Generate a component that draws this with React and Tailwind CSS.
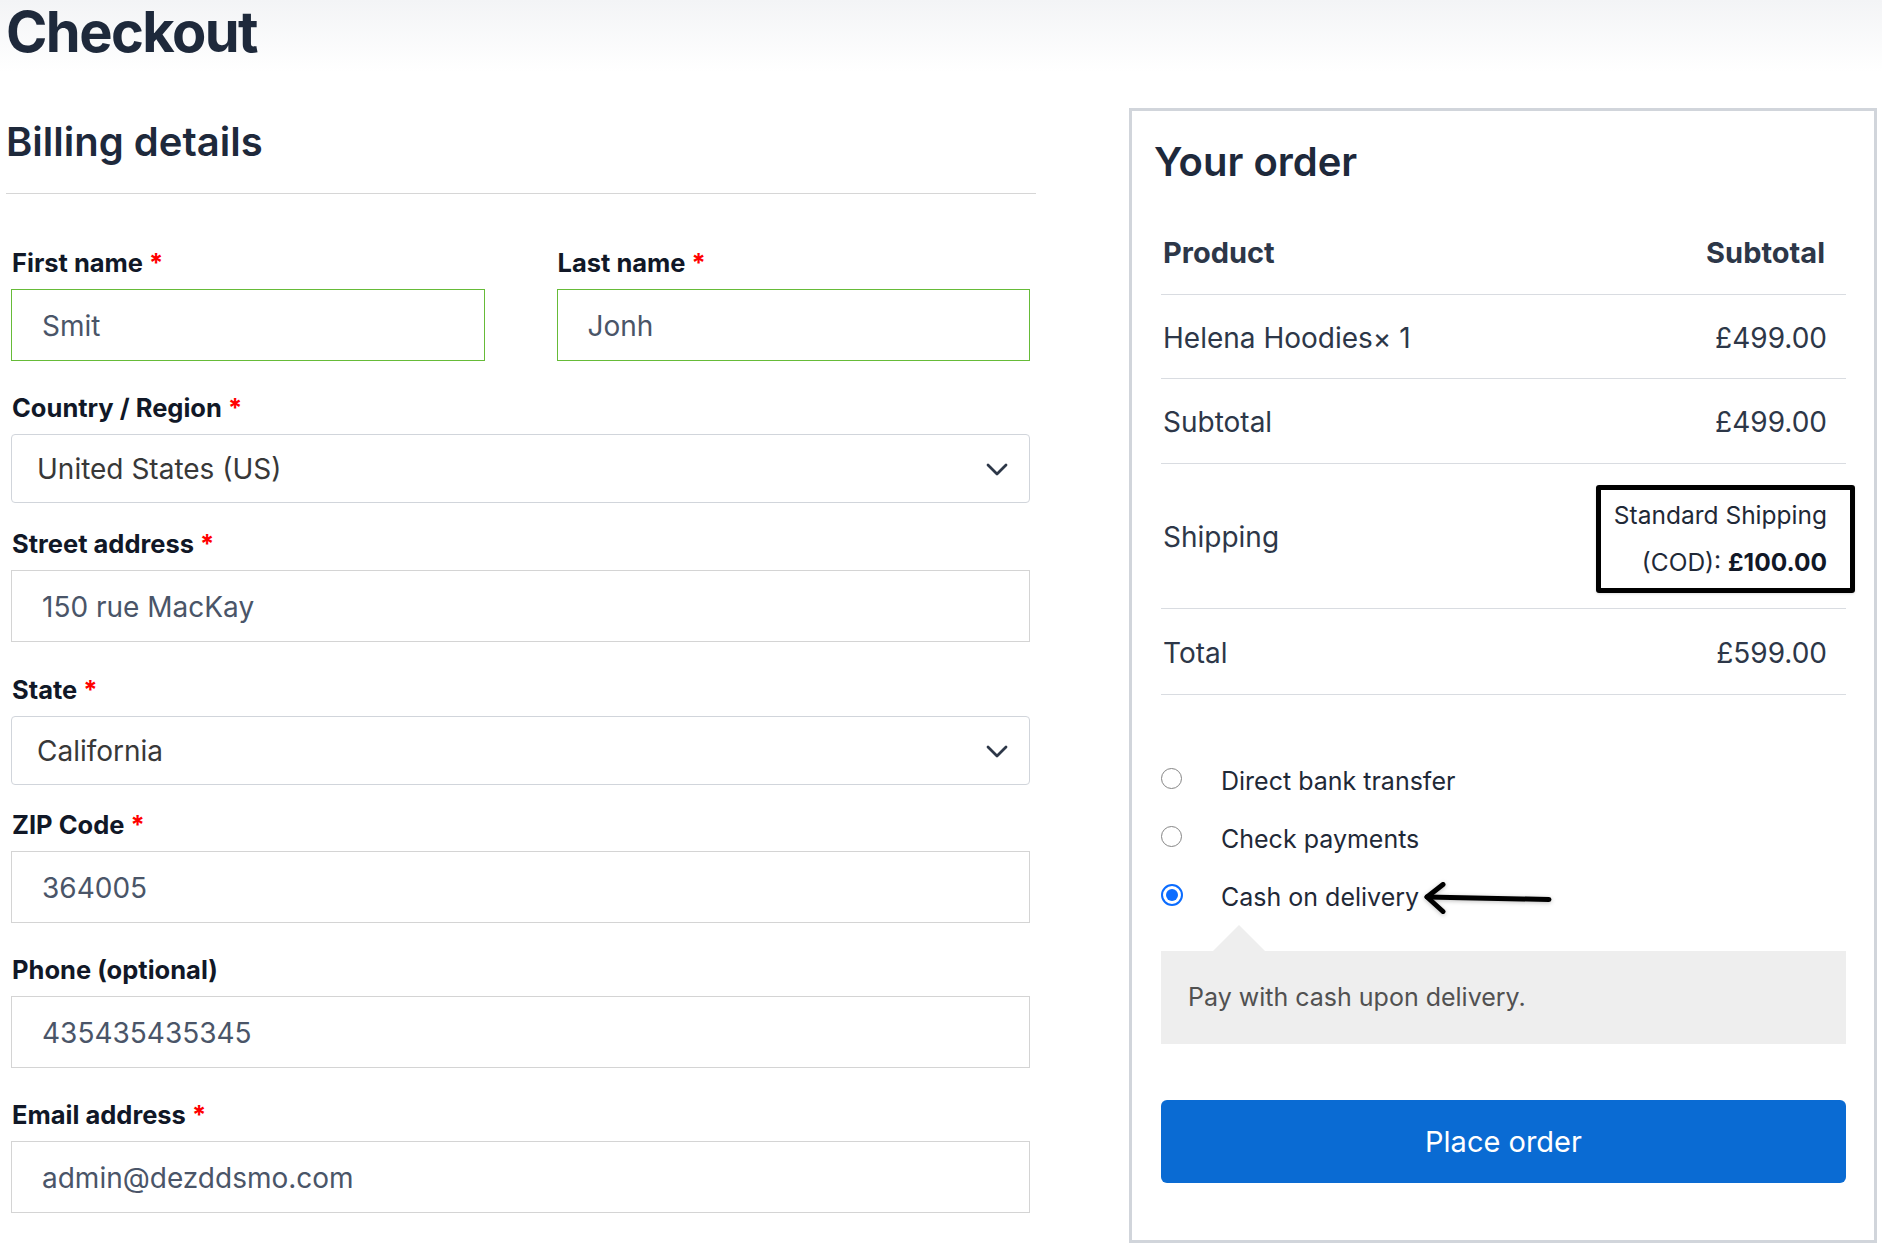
import React from "react";

function Label({ children, required = true }) {
  return (
    <div className="h-[36px] leading-[38px] text-[25.5px] font-bold text-[#111827] pl-[1px] mb-[9px]">
      {children}
      {required && <span className="text-[#ff0000] font-bold"> *</span>}
    </div>
  );
}

function TextInput({ value, green = false }) {
  return (
    <div
      className={
        green
          ? "h-[72px] border border-[#66bb38] flex items-center pl-[30px] pt-[2px] text-[28px] text-[#4a5568]"
          : "h-[72px] border border-[#d4d4d4] flex items-center pl-[30px] pt-[2px] text-[28px] text-[#4a5568]"
      }
    >
      {value}
    </div>
  );
}

function Select({ value }) {
  return (
    <div className="h-[69px] border border-[#d1d5db] rounded-[4px] flex items-center justify-between pl-[25px] pr-[21px] pt-[1px] text-[28px] text-[#383838]">
      <span>{value}</span>
      <svg width="22" height="13" viewBox="0 0 22 13" fill="none">
        <path d="M2 2 L11 11 L20 2" stroke="#2d3748" strokeWidth="2.8" strokeLinecap="round" strokeLinejoin="round" />
      </svg>
    </div>
  );
}

function Radio({ checked }) {
  if (checked) {
    return (
      <div className="w-[22px] h-[22px] rounded-full border-2 border-[#0b6cff] flex items-center justify-center mb-[7px] shrink-0">
        <div className="w-[12px] h-[12px] rounded-full bg-[#0b6cff]" />
      </div>
    );
  }
  return <div className="w-[21px] h-[21px] rounded-full border-[1.5px] border-[#858585] mb-[7px] shrink-0" />;
}

export default function App() {
  return (
    <div className="w-[1882px] h-[1246px] bg-white overflow-hidden font-['Inter','Noto_Sans',sans-serif]">
      <div className="h-[72px] bg-linear-to-b from-[#f3f4f6] to-white pl-[6px]">
        <h1 className="text-[56px] leading-[64px] font-bold text-[#1e293b] tracking-[-0.028em]">Checkout</h1>
      </div>

      <div className="flex pl-[6px]">
        {/* Left column */}
        <div className="w-[1030px] shrink-0">
          <div className="mt-[50px] pb-[31px] border-b border-[#d6d6d6]">
            <h2 className="text-[40px] leading-none font-semibold text-[#1e293b]">Billing details</h2>
          </div>

          <div className="pl-[5px] pr-[6px] mt-[50px]">
            <div className="grid grid-cols-2 gap-x-[72px] mb-[28px]">
              <div>
                <Label>First name</Label>
                <TextInput value="Smit" green />
              </div>
              <div>
                <Label>Last name</Label>
                <TextInput value="Jonh" green />
              </div>
            </div>

            <div className="mb-[22px]">
              <Label>Country / Region</Label>
              <Select value="United States (US)" />
            </div>

            <div className="mb-[29px]">
              <Label>Street address</Label>
              <TextInput value="150 rue MacKay" />
            </div>

            <div className="mb-[21px]">
              <Label>State</Label>
              <Select value="California" />
            </div>

            <div className="mb-[28px]">
              <Label>ZIP Code</Label>
              <TextInput value="364005" />
            </div>

            <div className="mb-[28px]">
              <Label required={false}>Phone (optional)</Label>
              <TextInput value="435435435345" />
            </div>

            <div>
              <Label>Email address</Label>
              <TextInput value="admin@dezddsmo.com" />
            </div>
          </div>
        </div>

        {/* Right column */}
        <div className="ml-[93px] mt-[36px] w-[748px] h-[1135px] shrink-0 border-[3px] border-[#d1d5db] pl-[29px] pr-[28px] pt-[31px]">
          <h2 className="ml-[-7px] text-[40px] leading-none font-semibold text-[#1e293b]">Your order</h2>

          <div className="mt-[29px] text-[#2d3748]">
            <div className="h-[84px] border-b border-[#d9dce1] flex items-center justify-between pl-[2px] pr-[21px] text-[29px] font-bold">
              <span>Product</span>
              <span>Subtotal</span>
            </div>
            <div className="h-[84px] border-b border-[#d9dce1] flex items-center justify-between pl-[2px] pr-[19px] pt-[2px] text-[28px]">
              <span>Helena Hoodies× 1</span>
              <span>£499.00</span>
            </div>
            <div className="h-[85px] border-b border-[#d9dce1] flex items-center justify-between pl-[2px] pr-[19px] pt-[2px] text-[28px]">
              <span>Subtotal</span>
              <span>£499.00</span>
            </div>
            <div className="h-[145px] border-b border-[#d9dce1] flex items-center justify-between pl-[2px] pr-[19px] pt-[2px] text-[28px]">
              <span>Shipping</span>
              <div className="mr-[-28px] mt-[4px] border-[5px] border-black rounded-[3px] shadow-sm pl-[13px] pr-[23px] py-[2px] text-right text-[24.5px] leading-[47px] text-[#1f2937]">
                <div>Standard Shipping</div>
                <div>
                  (COD): <span className="font-bold text-[#111827]">£100.00</span>
                </div>
              </div>
            </div>
            <div className="h-[86px] border-b border-[#d9dce1] flex items-center justify-between pl-[2px] pr-[19px] pt-[2px] text-[28px]">
              <span>Total</span>
              <span>£599.00</span>
            </div>
          </div>

          <div className="mt-[58px] text-[25px] text-[#1f2937]">
            <div className="h-[58px] flex items-center">
              <Radio />
              <span className="ml-[39px]">Direct bank transfer</span>
            </div>
            <div className="h-[58px] flex items-center">
              <Radio />
              <span className="ml-[39px]">Check payments</span>
            </div>
            <div className="h-[58px] flex items-center">
              <Radio checked />
              <span className="ml-[38px]">Cash on delivery</span>
              <svg className="ml-[3px] drop-shadow-[0_1px_2px_rgba(0,0,0,0.25)]" width="132" height="36" viewBox="0 0 132 36" fill="none">
                <path d="M5 17 L127 19.5" stroke="#000" strokeWidth="5" strokeLinecap="round" />
                <path d="M21 4.5 L5 17 L21 31.5" stroke="#000" strokeWidth="5" strokeLinecap="round" strokeLinejoin="round" />
              </svg>
            </div>
          </div>

          <div className="relative mt-[24px] h-[93px] bg-[#eeeeee] flex items-center pl-[27px] text-[25px] text-[#515151]">
            <div className="absolute left-[52px] top-[-26px] w-0 h-0 border-l-[26px] border-r-[26px] border-b-[26px] border-l-transparent border-r-transparent border-b-[#eeeeee]" />
            Pay with cash upon delivery.
          </div>

          <button className="mt-[56px] w-full h-[83px] bg-[#0a6bd3] rounded-[6px] text-white text-[29px]">
            Place order
          </button>
        </div>
      </div>
    </div>
  );
}
